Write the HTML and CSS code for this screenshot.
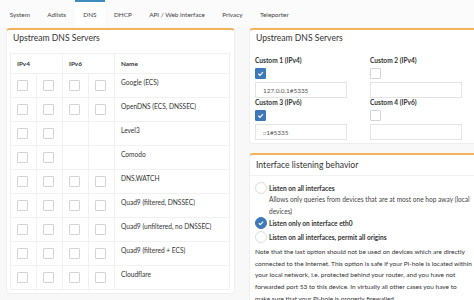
FILE: index.html
```html
<!DOCTYPE html>
<html lang="en">
<head>
  <meta charset="UTF-8">
  <title>Settings - DNS</title>
  <link rel="stylesheet" href="styles.css">
</head>
<body>
  <div class="tabs">
    <span class="tab">System</span>
    <span class="tab">Adlists</span>
    <span class="tab active">DNS</span>
    <span class="tab">DHCP</span>
    <span class="tab">API / Web interface</span>
    <span class="tab">Privacy</span>
    <span class="tab">Teleporter</span>
  </div>

  <div class="content">
    <div class="col">
      <div class="box">
        <div class="box-header">Upstream DNS Servers</div>
        <table class="servers">
          <thead>
            <tr><th colspan="2">IPv4</th><th colspan="2">IPv6</th><th>Name</th></tr>
          </thead>
          <tbody>
            <tr><td><i class="cb"></i></td><td><i class="cb"></i></td><td><i class="cb"></i></td><td><i class="cb"></i></td><td>Google (ECS)</td></tr>
            <tr><td><i class="cb"></i></td><td><i class="cb"></i></td><td><i class="cb"></i></td><td><i class="cb"></i></td><td>OpenDNS (ECS, DNSSEC)</td></tr>
            <tr><td><i class="cb"></i></td><td><i class="cb"></i></td><td></td><td></td><td>Level3</td></tr>
            <tr><td><i class="cb"></i></td><td><i class="cb"></i></td><td></td><td></td><td>Comodo</td></tr>
            <tr><td><i class="cb"></i></td><td><i class="cb"></i></td><td><i class="cb"></i></td><td><i class="cb"></i></td><td>DNS.WATCH</td></tr>
            <tr><td><i class="cb"></i></td><td><i class="cb"></i></td><td><i class="cb"></i></td><td><i class="cb"></i></td><td>Quad9 (filtered, DNSSEC)</td></tr>
            <tr><td><i class="cb"></i></td><td><i class="cb"></i></td><td><i class="cb"></i></td><td><i class="cb"></i></td><td>Quad9 (unfiltered, no DNSSEC)</td></tr>
            <tr><td><i class="cb"></i></td><td><i class="cb"></i></td><td><i class="cb"></i></td><td><i class="cb"></i></td><td>Quad9 (filtered + ECS)</td></tr>
            <tr><td><i class="cb"></i></td><td><i class="cb"></i></td><td><i class="cb"></i></td><td><i class="cb"></i></td><td>Cloudflare</td></tr>
          </tbody>
        </table>
      </div>
    </div>

    <div class="col">
      <div class="box">
        <div class="box-header">Upstream DNS Servers</div>
        <div class="custom-grid">
          <div class="custom">
            <label>Custom 1 (IPv4)</label>
            <i class="cb checked"><svg viewBox="0 0 12 12"><path d="M3 6.2l2.2 2.2L9.2 4.2" fill="none" stroke="#fff" stroke-width="1.6"/></svg></i>
            <div class="input">127.0.0.1#5335</div>
          </div>
          <div class="custom">
            <label>Custom 2 (IPv4)</label>
            <i class="cb"></i>
            <div class="input"></div>
          </div>
          <div class="custom">
            <label>Custom 3 (IPv6)</label>
            <i class="cb checked"><svg viewBox="0 0 12 12"><path d="M3 6.2l2.2 2.2L9.2 4.2" fill="none" stroke="#fff" stroke-width="1.6"/></svg></i>
            <div class="input">::1#5335</div>
          </div>
          <div class="custom">
            <label>Custom 4 (IPv6)</label>
            <i class="cb"></i>
            <div class="input"></div>
          </div>
        </div>
      </div>

      <div class="box">
        <div class="box-header lined">Interface listening behavior</div>
        <div class="box-body">
          <div class="radio">
            <i class="rd"></i>
            <div>
              <b>Listen on all interfaces</b>
              <p class="desc">Allows only queries from devices that are at most one hop away (local devices)</p>
            </div>
          </div>
          <div class="radio">
            <i class="rd checked"><svg viewBox="0 0 14 14"><path d="M4 7.2l2 2L10 5.2" fill="none" stroke="#fff" stroke-width="1.6"/></svg></i>
            <div><b>Listen only on interface eth0</b></div>
          </div>
          <div class="radio">
            <i class="rd"></i>
            <div><b>Listen on all interfaces, permit all origins</b></div>
          </div>
          <p class="note">Note that the last option should not be used on devices which are directly connected to the Internet. This option is safe if your Pi-hole is located within your local network, i.e. protected behind your router, and you have not forwarded port 53 to this device. In virtually all other cases you have to make sure that your Pi-hole is properly firewalled.</p>
        </div>
      </div>
    </div>
  </div>
</body>
</html>
```

FILE: styles.css
```css
* {
  box-sizing: border-box;
  margin: 0;
  padding: 0;
}

html, body {
  overflow: hidden;
}

body {
  font-family: Lato, 'Liberation Sans', sans-serif;
  font-size: 7px;
  color: #333;
  background-color: #f8f8f8;
  width: 478px;
  height: 300px;
}

.tabs {
  display: flex;
  height: 27px;
  padding-left: 1px;
  background-color: #fbfbfb;
}

.tab {
  display: flex;
  align-items: center;
  padding: 0 8.7px;
  font-size: 6.4px;
  color: #444;
  border-top: 2px solid transparent;
}

.tab.active {
  border-top-color: #3c8dbc;
  background-color: #fff;
}

.content {
  display: flex;
  padding-top: 1px;
}

.col {
  width: 242px;
  flex: none;
  padding: 0 7px 0 6px;
  display: flex;
  flex-direction: column;
  gap: 9px;
}

.col + .col {
  width: 236px;
  padding: 0 0 0 7px;
}

.box {
  background-color: #fff;
  border: 1px solid #eeeeee;
  border-top: 2px solid #f3b25c;
  border-radius: 4px;
}

.box-header {
  font-size: 8.6px;
  line-height: 10px;
  color: #333;
  padding: 3px 6px 10px;
}

.box-header.lined {
  padding: 5px 6px 5px;
  border-bottom: 1px solid #f2f2f2;
}

.servers {
  border-collapse: collapse;
  margin: 0 3px 3px;
  width: 220px;
}

.servers th, .servers td {
  border: 1px solid #f1f1f1;
  text-align: left;
  vertical-align: top;
  padding: 6px 6px 0;
  font-size: 6.6px;
  line-height: 8px;
  color: #333;
}

.servers thead tr {
  height: 20px;
}

.servers tbody tr {
  height: 24px;
}

.servers th {
  font-weight: bold;
  vertical-align: middle;
  padding: 0 6px;
  font-size: 6.4px;
}

.servers td {
  width: 26px;
}

.servers td:last-child {
  width: auto;
  padding-top: 4px;
}

.cb {
  display: block;
  width: 11px;
  height: 11px;
  border: 1px solid #d4d4d4;
  border-radius: 1px;
  background-color: #fff;
}

.cb.checked {
  background-color: #3d79b8;
  border-color: #3d79b8;
}

.cb svg, .rd svg {
  display: block;
  width: 100%;
  height: 100%;
}

.custom-grid {
  display: grid;
  grid-template-columns: 115px 115px;
  padding: 3px 5px 3px;
}

.custom label {
  display: block;
  font-weight: bold;
  font-size: 6.6px;
  line-height: 9px;
  margin-bottom: 3px;
}

.custom .cb {
  margin: 0 0 3px 0;
}

.input {
  width: 92px;
  height: 16px;
  border: 1px solid #e4e4e4;
  padding: 4px 7px;
  font-size: 6.4px;
  line-height: 7px;
  color: #555;
}

.box-body {
  padding: 6px 5px 4px;
}

.radio {
  display: flex;
  gap: 2px;
  font-size: 6.6px;
}

.radio + .radio + .radio {
  margin-top: 2px;
}

.radio b {
  display: block;
  line-height: 12px;
}

.desc {
  line-height: 11.5px;
  color: #444;
}

.rd {
  flex: none;
  width: 12px;
  height: 12px;
  border: 1px solid #ddd;
  border-radius: 50%;
}

.rd.checked {
  background-color: #3d79b8;
  border-color: #3d79b8;
}

.note {
  margin-top: 3px;
  font-size: 6.5px;
  line-height: 11.7px;
  color: #333;
}
```
